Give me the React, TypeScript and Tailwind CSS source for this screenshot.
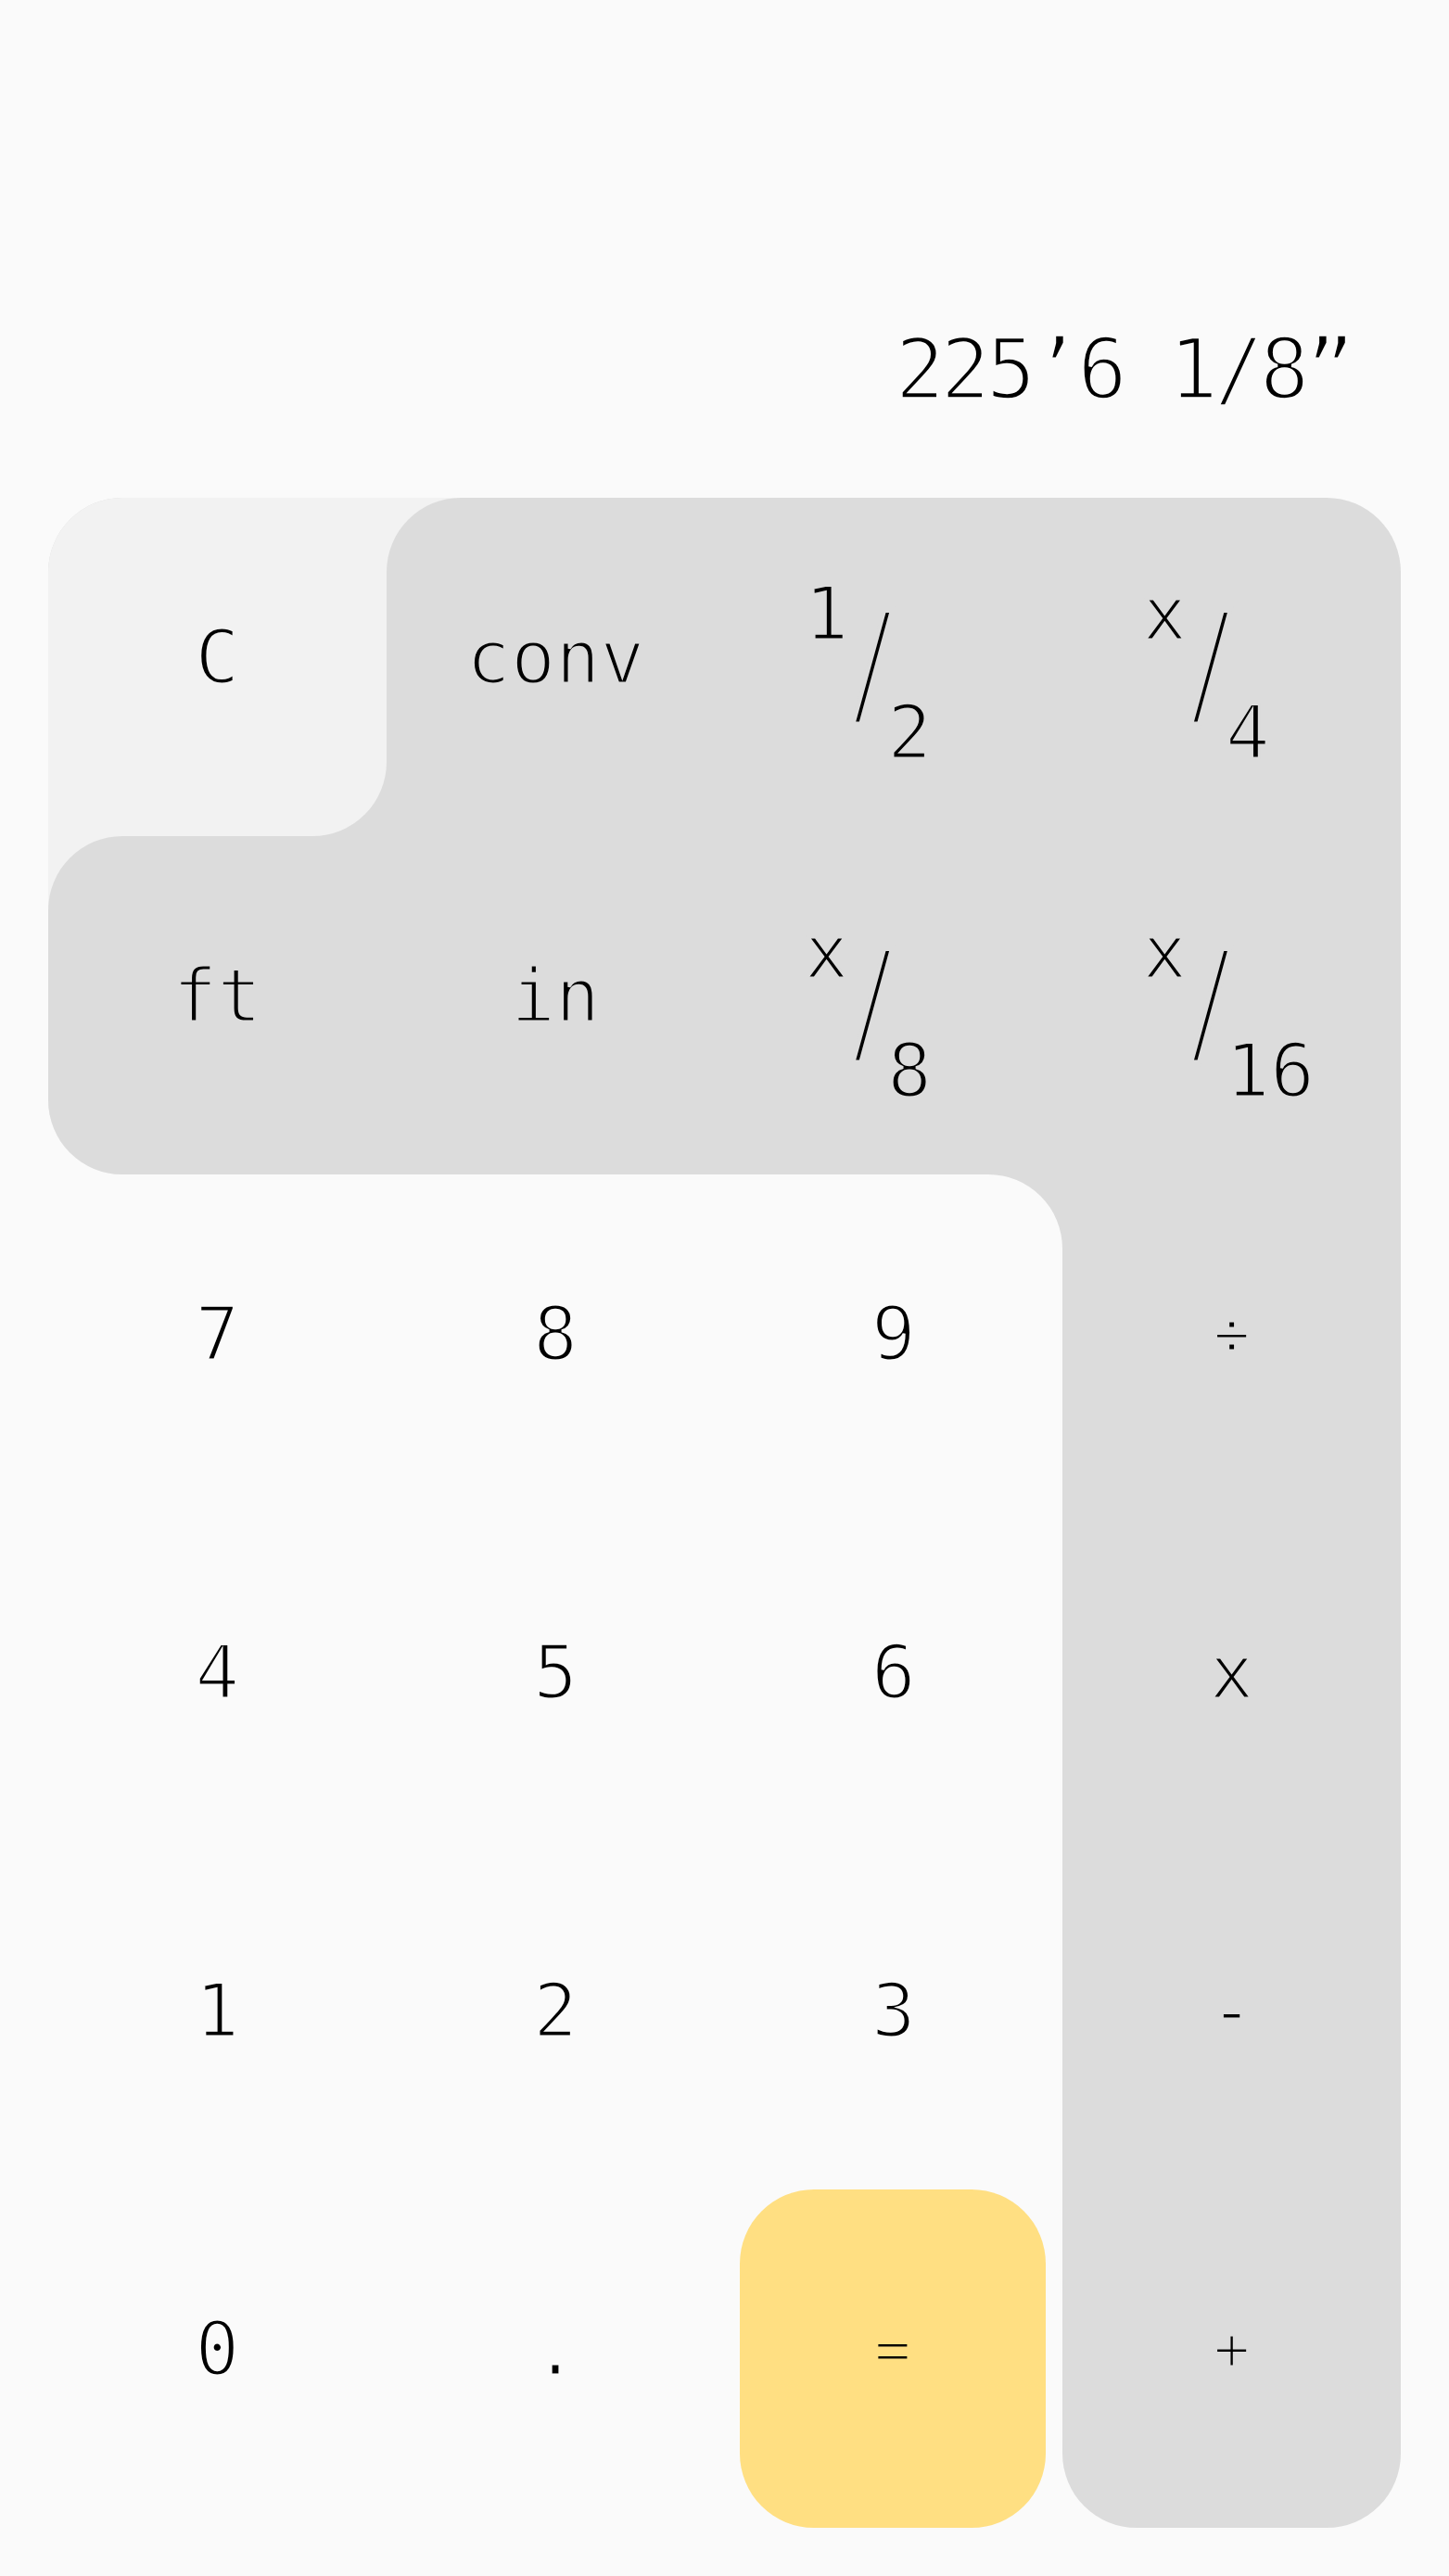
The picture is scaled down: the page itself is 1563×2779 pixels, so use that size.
import React from "react";

type Cell = {
  outer: string;
  inner: string;
  stroke: string;
  label?: string;
  frac?: [string, string];
  size?: string;
};

const S_PAGE = "[-webkit-text-stroke:3px_#fafafa]";
const S_DARK = "[-webkit-text-stroke:3px_#dcdcdc]";
const S_LIGHT = "[-webkit-text-stroke:3px_#f2f2f2]";
const S_YEL = "[-webkit-text-stroke:3px_#ffdf82]";

const cells: Cell[] = [
  // row 1
  { outer: "bg-[#dcdcdc] rounded-tl-[80px] overflow-hidden", inner: "bg-[#f2f2f2] rounded-br-[80px]", stroke: S_LIGHT, label: "C" },
  { outer: "bg-[#f2f2f2]", inner: "bg-[#dcdcdc] rounded-tl-[80px]", stroke: S_DARK, label: "conv" },
  { outer: "", inner: "bg-[#dcdcdc]", stroke: S_DARK, frac: ["1", "2"] },
  { outer: "", inner: "bg-[#dcdcdc] rounded-tr-[80px]", stroke: S_DARK, frac: ["x", "4"] },
  // row 2
  { outer: "bg-[#f2f2f2] rounded-bl-[80px] overflow-hidden", inner: "bg-[#dcdcdc] rounded-tl-[80px]", stroke: S_DARK, label: "ft" },
  { outer: "", inner: "bg-[#dcdcdc]", stroke: S_DARK, label: "in" },
  { outer: "", inner: "bg-[#dcdcdc]", stroke: S_DARK, frac: ["x", "8"] },
  { outer: "", inner: "bg-[#dcdcdc]", stroke: S_DARK, frac: ["x", "16"] },
  // row 3
  { outer: "", inner: "", stroke: S_PAGE, label: "7" },
  { outer: "", inner: "", stroke: S_PAGE, label: "8" },
  { outer: "bg-[#dcdcdc]", inner: "bg-[#fafafa] rounded-tr-[80px]", stroke: S_PAGE, label: "9" },
  { outer: "", inner: "bg-[#dcdcdc]", stroke: S_DARK, label: "÷", size: "text-[66px]" },
  // row 4
  { outer: "", inner: "", stroke: S_PAGE, label: "4" },
  { outer: "", inner: "", stroke: S_PAGE, label: "5" },
  { outer: "", inner: "", stroke: S_PAGE, label: "6" },
  { outer: "", inner: "bg-[#dcdcdc]", stroke: S_DARK, label: "x" },
  // row 5
  { outer: "", inner: "", stroke: S_PAGE, label: "1" },
  { outer: "", inner: "", stroke: S_PAGE, label: "2" },
  { outer: "", inner: "", stroke: S_PAGE, label: "3" },
  { outer: "", inner: "bg-[#dcdcdc]", stroke: S_DARK, label: "-" },
  // row 6
  { outer: "", inner: "", stroke: S_PAGE, label: "0" },
  { outer: "", inner: "", stroke: S_PAGE, label: "." },
  { outer: "", inner: "bg-[#ffdf82] rounded-[80px] ml-[16px] mr-[18px]", stroke: S_YEL, label: "=", size: "text-[66px]" },
  { outer: "", inner: "bg-[#dcdcdc] rounded-b-[80px]", stroke: S_DARK, label: "+", size: "text-[66px]" },
];

function Frac({ n, d, stroke }: { n: string; d: string; stroke: string }) {
  return (
    <div className="flex h-full w-full items-start pl-[86px]">
      <span className={`mt-[86px] w-[48px] shrink-0 text-[80px] leading-none ${stroke}`}>{n}</span>
      <span className="mt-[135px] shrink-0 scale-y-[1.7] text-[89px] leading-none tracking-[-12px] [-webkit-text-stroke:4.2px_#dcdcdc]">
        /
      </span>
      <span className={`mt-[214px] shrink-0 text-[80px] leading-none ${stroke}`}>{d}</span>
    </div>
  );
}

export default function App() {
  return (
    <div className="min-h-screen bg-[#fafafa] font-['DejaVu_Sans_Mono',monospace] text-black">
      <div className="flex h-[537px] items-end justify-end pb-[93px] pr-[106px]">
        <span className="whitespace-pre text-[90px] leading-none tracking-[-5px] [-webkit-text-stroke:3.5px_#fafafa]">225’6 1/8”</span>
      </div>
      <div className="grid grid-cols-4 px-[52px]">
        {cells.map((c, i) => (
          <div key={i} className={`h-[365px] ${c.outer}`}>
            <div className={`h-full ${c.inner}`}>
              {c.frac ? (
                <Frac n={c.frac[0]} d={c.frac[1]} stroke={c.stroke} />
              ) : (
                <div className="flex h-full items-center justify-center pb-[20px]">
                  <span className={`${c.size ?? "text-[80px]"} leading-none ${c.stroke}`}>{c.label}</span>
                </div>
              )}
            </div>
          </div>
        ))}
      </div>
    </div>
  );
}
